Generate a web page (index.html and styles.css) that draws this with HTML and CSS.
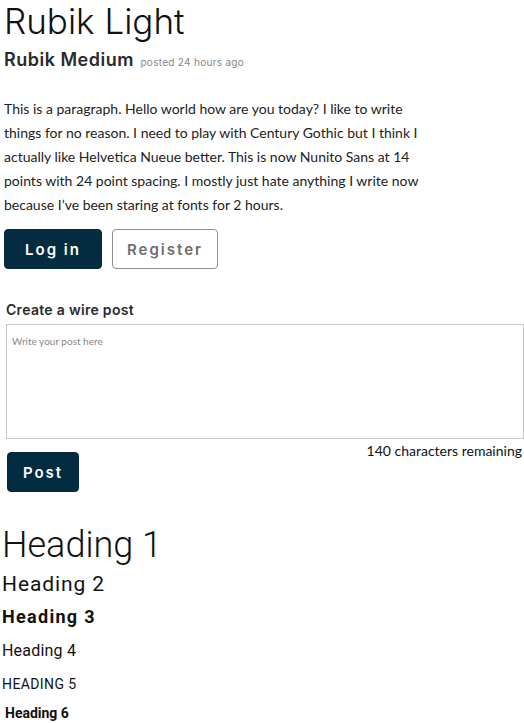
FILE: index.html
```html
<!DOCTYPE html>
<html>
<head>
<meta charset="utf-8">
<link rel="stylesheet" href="styles.css">
</head>
<body>
<div class="page">
  <h1 class="title-light">Rubik Light</h1>
  <div class="byline"><span class="title-medium">Rubik Medium</span> <span class="posted">posted 24 hours ago</span></div>
  <p class="para">This is a paragraph. Hello world how are you today? I like to write things for no reason. I need to play with Century Gothic but I think I actually like Helvetica Nueue better. This is now Nunito Sans at 14 points with 24 point spacing. I mostly just hate anything I write now because I’ve been staring at fonts for 2 hours.</p>
  <div class="actions">
    <button class="btn btn-primary">Log in</button>
    <button class="btn btn-outline">Register</button>
  </div>
  <form class="wire">
    <label class="wire-label">Create a wire post</label>
    <textarea class="wire-input" placeholder="Write your post here"></textarea>
    <div class="remaining">140 characters remaining</div>
    <button type="button" class="btn btn-primary btn-post">Post</button>
  </form>
  <div class="headings">
    <div class="h h1">Heading 1</div>
    <div class="h h2">Heading 2</div>
    <div class="h h3">Heading 3</div>
    <div class="h h4">Heading 4</div>
    <div class="h h5">HEADING 5</div>
    <div class="h h6">Heading 6</div>
  </div>
</div>
</body>
</html>
```
FILE: styles.css
```css
html, body { margin: 0; padding: 0; background: #fff; }
body { font-family: "Inter", "Roboto", sans-serif; color: #1a1a1a; }
.page { padding: 0 0 0 4px; }
.title-light {
  margin: 0;
  font-family: "Inter", sans-serif;
  font-weight: 300;
  font-size: 35px;
  line-height: 42px;
  color: #111;
}
.byline { margin-top: 4px; line-height: 28px; }
.title-medium {
  font-family: "Inter", sans-serif;
  font-weight: 600;
  font-size: 18px;
  letter-spacing: 0.5px;
  color: #2a2a2a;
}
.posted { font-size: 10px; color: #888; letter-spacing: 0.3px; margin-left: 2px; }
.para {
  margin: 21px 0 0 0;
  width: 430px;
  font-family: "Lato", sans-serif;
  font-size: 14px;
  line-height: 24px;
  color: #222;
}
.actions { display: flex; gap: 10px; margin-top: 12px; }
.btn {
  font-family: "Inter", sans-serif;
  font-weight: 600;
  font-size: 15px;
  letter-spacing: 2px;
  height: 40px;
  border-radius: 4px;
  padding: 0;
  cursor: pointer;
}
.btn-primary { background: #032c40; color: #fff; border: 1px solid #032c40; width: 98px; }
.btn-outline { background: #fff; color: #6e6e6e; border: 1px solid #8e8e8e; width: 106px; }
.wire { display: flex; flex-direction: column; margin-top: 32px; padding-left: 2px; }
.wire-label {
  font-family: "Inter", sans-serif;
  font-weight: 600;
  font-size: 14px;
  letter-spacing: 0.3px;
  color: #2a2a2a;
  line-height: 18px;
}
.wire-input {
  margin-top: 5px;
  box-sizing: border-box;
  width: 518px;
  height: 115px;
  border: 1px solid #c8c8c8;
  padding: 10px 5px;
  font-family: "Lato", sans-serif;
  font-size: 10px;
  resize: none;
}
.wire-input::placeholder { color: #888; }
.remaining {
  align-self: flex-end;
  margin-right: 2px;
  font-family: "Lato", sans-serif;
  font-size: 14px;
  line-height: 18px;
  color: #111;
  margin-top: 3px;
}
.btn-post { width: 72px; margin-top: -8px; margin-left: 1px; }
.headings { margin-top: 33px; margin-left: -2px; }
.h { font-family: "Roboto", sans-serif; color: #111; }
.h1 { font-size: 36px; font-weight: 300; line-height: 40px; }
.h2 { font-size: 21px; font-weight: 400; letter-spacing: 0.9px; line-height: 30px; margin-top: 4px; }
.h3 { font-size: 18px; font-weight: 700; letter-spacing: 1.3px; line-height: 30px; margin-top: 3px; }
.h4 { font-size: 16px; font-weight: 400; letter-spacing: 0.2px; line-height: 30px; margin-top: 4px; }
.h5 { font-size: 14px; font-weight: 400; letter-spacing: 0.4px; line-height: 30px; margin-top: 3px; }
.h6 { font-size: 14px; font-weight: 700; line-height: 30px; margin-left: 3px; margin-top: -1px; }
```
